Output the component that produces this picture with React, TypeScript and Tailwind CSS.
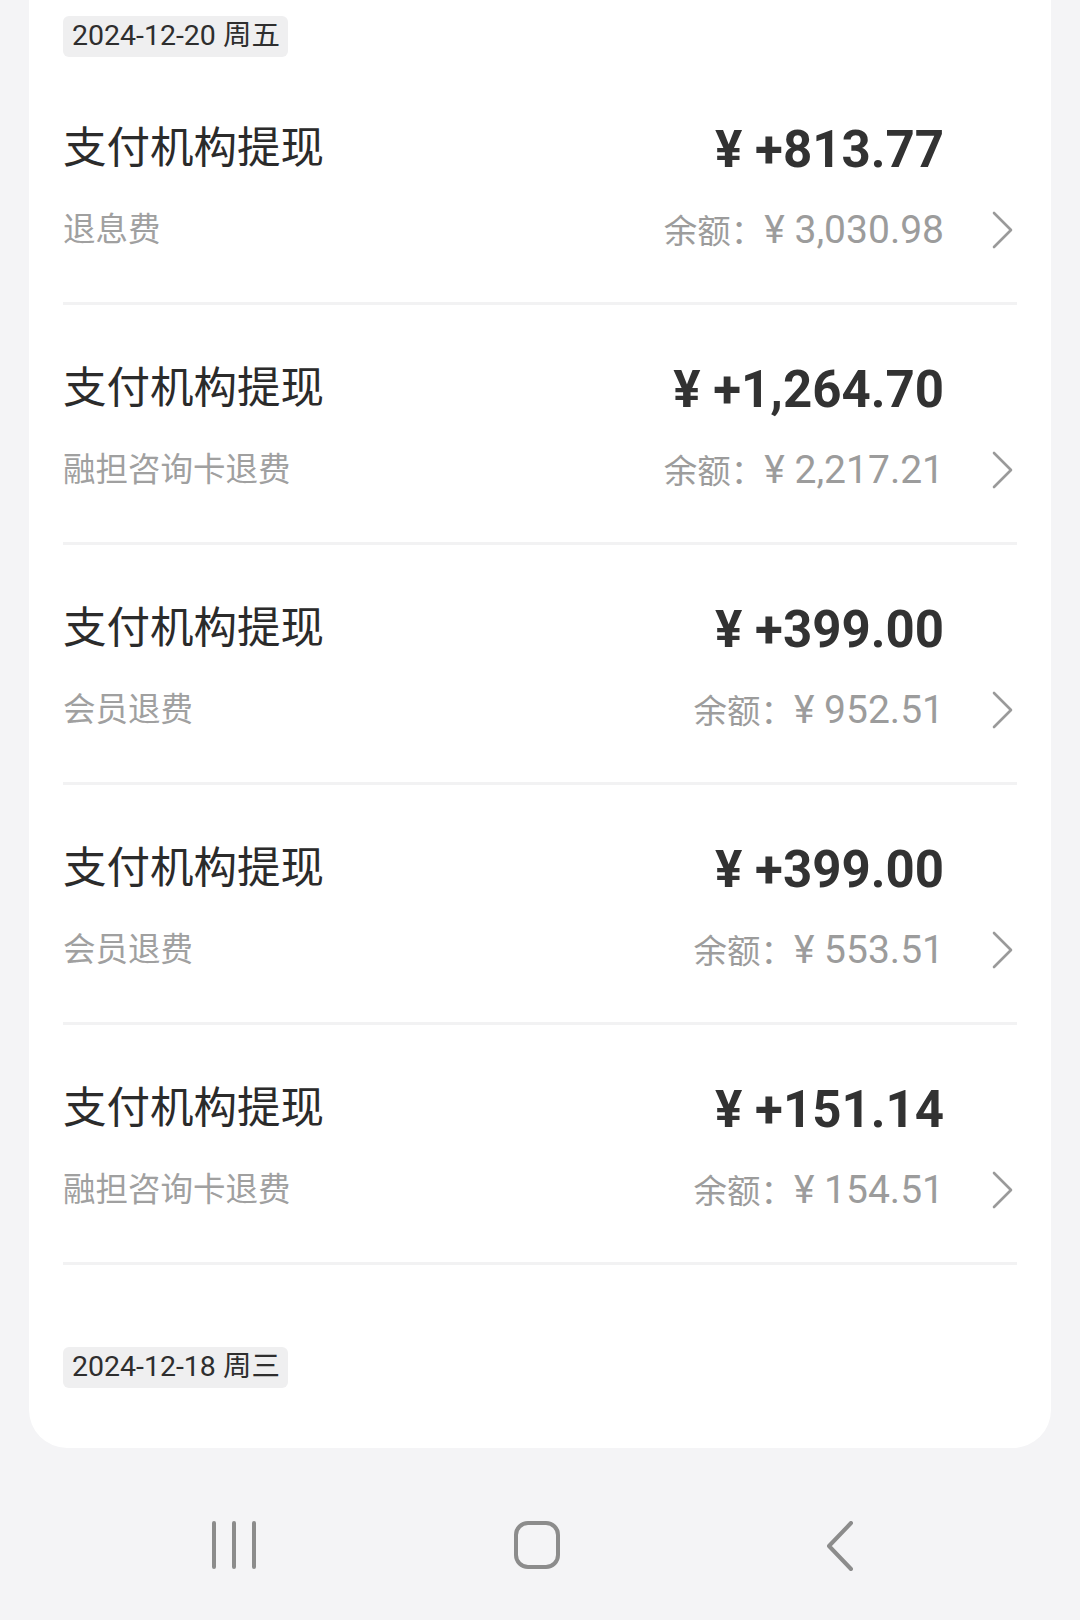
import React from 'react'

type Entry = {
  title: string
  note: string
  amount: string
  balance: string
}

const entries: Entry[] = [
  { title: '支付机构提现', note: '退息费', amount: '+813.77', balance: '3,030.98' },
  { title: '支付机构提现', note: '融担咨询卡退费', amount: '+1,264.70', balance: '2,217.21' },
  { title: '支付机构提现', note: '会员退费', amount: '+399.00', balance: '952.51' },
  { title: '支付机构提现', note: '会员退费', amount: '+399.00', balance: '553.51' },
  { title: '支付机构提现', note: '融担咨询卡退费', amount: '+151.14', balance: '154.51' },
]

function DateBadge({ label }: { label: string }): JSX.Element {
  return (
    <div className="inline-flex h-[41px] w-[225px] items-center rounded-[6px] bg-[#efeff0] pl-[9px] text-[28.5px] leading-none text-[#2e2e2e]">
      {label}
    </div>
  )
}

function Chevron(): JSX.Element {
  return (
    <svg width="26" height="40" viewBox="0 0 26 40" fill="none" aria-hidden>
      <path d="M3 3 L20 20 L3 37" stroke="#9a9a9a" strokeWidth="2.6" strokeLinecap="round" strokeLinejoin="round" />
    </svg>
  )
}

function EntryRow({ entry }: { entry: Entry }): JSX.Element {
  return (
    <div className="flex h-[240px] flex-col border-b-[3px] border-[#f2f2f3] pt-[52px]">
      <div className="flex h-[64px] items-center justify-between pr-[73px]">
        <span className="text-[43.5px] leading-none text-[#2b2b2b]">{entry.title}</span>
        <span className="text-[51px] font-bold leading-none text-[#323232]">¥ {entry.amount}</span>
      </div>
      <div className="mt-[24px] flex h-[50px] items-center justify-between">
        <span className="text-[32.5px] leading-none text-[#a0a0a0]">{entry.note}</span>
        <div className="flex items-center">
          <span className="leading-none text-[#9c9c9c]">
            <span className="text-[33.5px]">余额：</span>
            <span className="text-[39px]">¥ {entry.balance}</span>
          </span>
          <span className="ml-[47px] flex">
            <Chevron />
          </span>
        </div>
      </div>
    </div>
  )
}

function NavBar(): JSX.Element {
  return (
    <div className="flex h-[173px] items-start justify-center pt-[73px] pr-[6px]">
      <div className="flex w-[303px] justify-center">
        <svg width="48" height="48" viewBox="0 0 48 48" fill="none" aria-hidden>
          <path d="M4 2 V46 M24 2 V46 M44 2 V46" stroke="#8c8c8c" strokeWidth="4" strokeLinecap="round" />
        </svg>
      </div>
      <div className="flex w-[303px] justify-center">
        <svg width="48" height="48" viewBox="0 0 48 48" fill="none" aria-hidden>
          <rect x="3" y="2" width="42" height="44" rx="12" stroke="#8c8c8c" strokeWidth="4" />
        </svg>
      </div>
      <div className="flex w-[303px] justify-center">
        <svg width="32" height="50" viewBox="0 0 32 50" fill="none" aria-hidden>
          <path d="M27 2 L5 25 L27 48" stroke="#8c8c8c" strokeWidth="4" strokeLinecap="round" strokeLinejoin="round" />
        </svg>
      </div>
    </div>
  )
}

export default function App(): JSX.Element {
  return (
    <div
      className="min-h-[1620px] w-[1080px] bg-[#f4f4f6]"
      style={{ fontFamily: 'Roboto, "Noto Sans CJK SC", sans-serif' }}
    >
      <div className="mx-[29px] rounded-b-[38px] bg-white px-[34px] pt-[16px] pb-[60px]">
        <DateBadge label="2024-12-20 周五" />
        <div className="mt-[8px] flex flex-col">
          {entries.map((entry, index) => (
            <EntryRow key={index} entry={entry} />
          ))}
        </div>
        <div className="mt-[82px]">
          <DateBadge label="2024-12-18 周三" />
        </div>
      </div>
      <NavBar />
    </div>
  )
}
